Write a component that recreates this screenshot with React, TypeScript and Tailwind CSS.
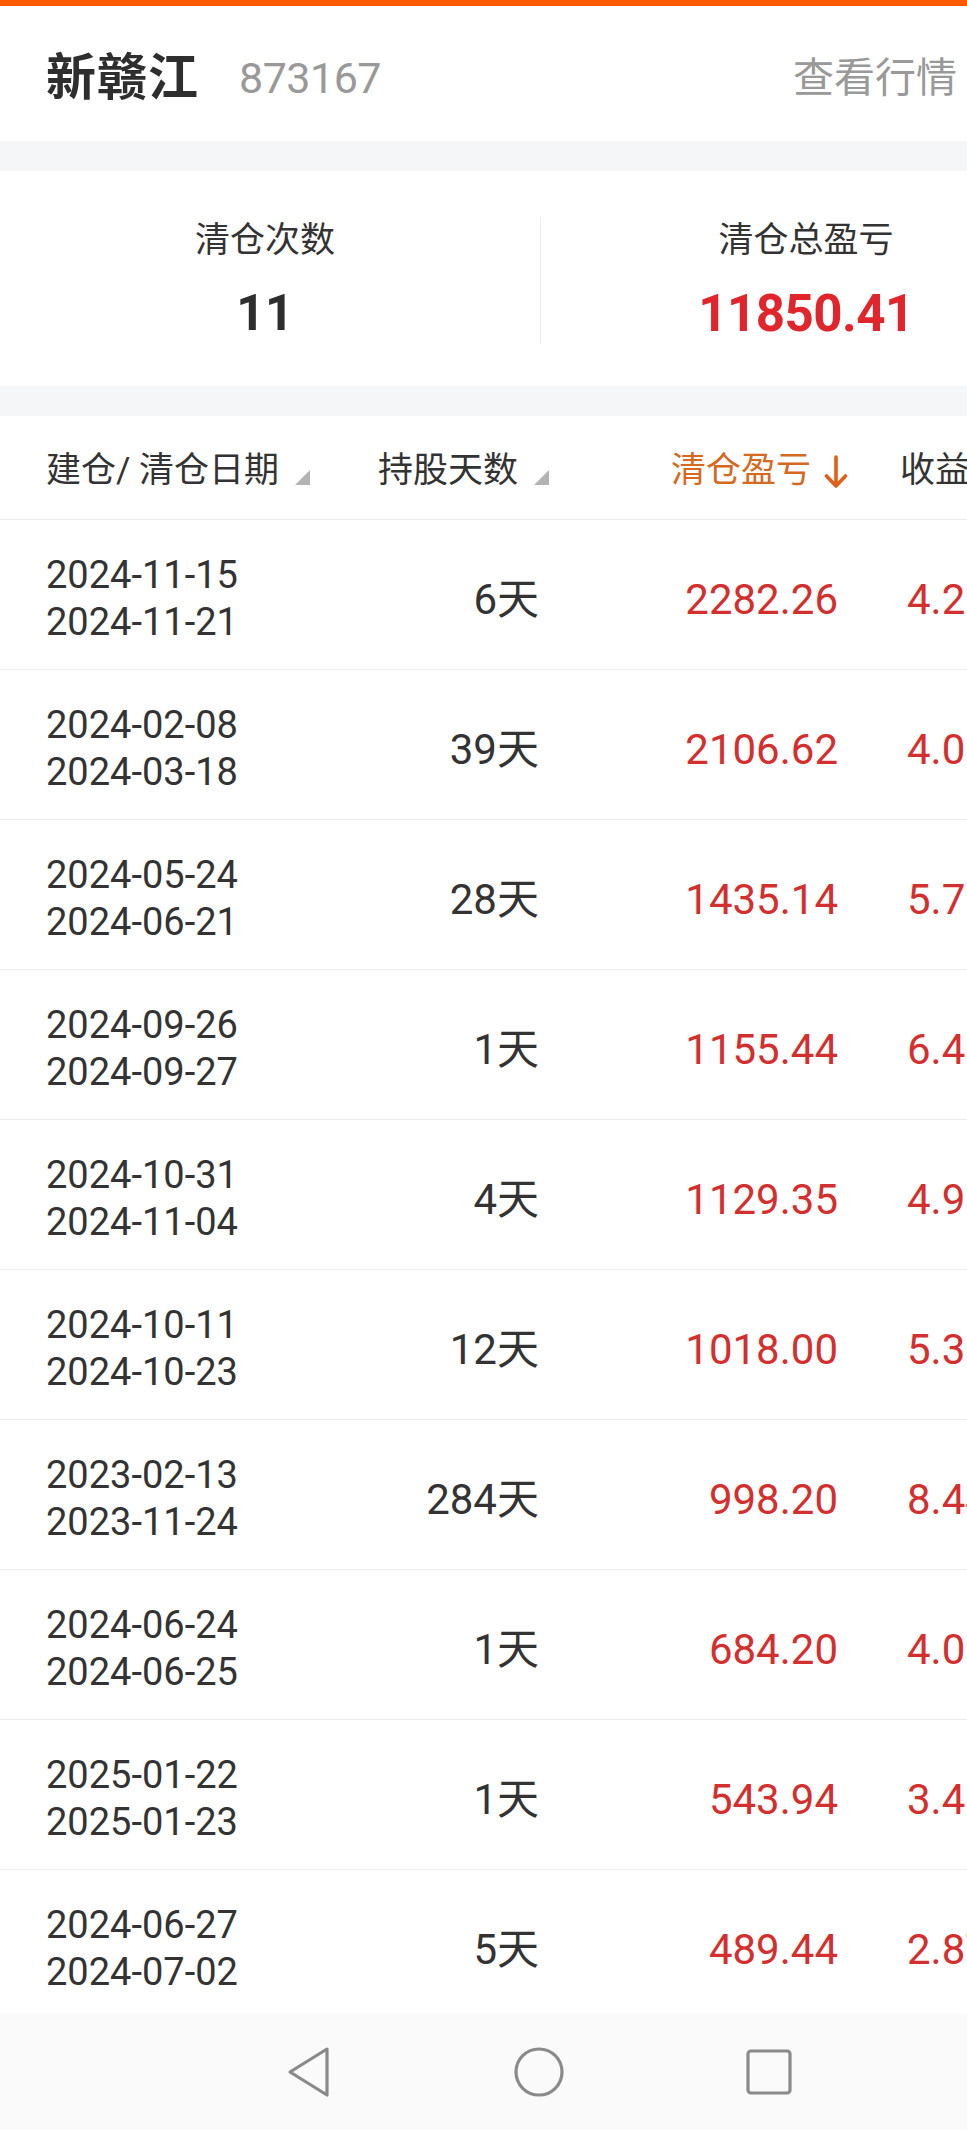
import React from "react";

interface Trade {
  open: string;
  close: string;
  days: number;
  profit: string;
  yieldPct: string;
}

const trades: Trade[] = [
  { open: "2024-11-15", close: "2024-11-21", days: 6, profit: "2282.26", yieldPct: "4.25%" },
  { open: "2024-02-08", close: "2024-03-18", days: 39, profit: "2106.62", yieldPct: "4.01%" },
  { open: "2024-05-24", close: "2024-06-21", days: 28, profit: "1435.14", yieldPct: "5.72%" },
  { open: "2024-09-26", close: "2024-09-27", days: 1, profit: "1155.44", yieldPct: "6.41%" },
  { open: "2024-10-31", close: "2024-11-04", days: 4, profit: "1129.35", yieldPct: "4.93%" },
  { open: "2024-10-11", close: "2024-10-23", days: 12, profit: "1018.00", yieldPct: "5.31%" },
  { open: "2023-02-13", close: "2023-11-24", days: 284, profit: "998.20", yieldPct: "8.44%" },
  { open: "2024-06-24", close: "2024-06-25", days: 1, profit: "684.20", yieldPct: "4.02%" },
  { open: "2025-01-22", close: "2025-01-23", days: 1, profit: "543.94", yieldPct: "3.46%" },
  { open: "2024-06-27", close: "2024-07-02", days: 5, profit: "489.44", yieldPct: "2.87%" },
];

const SortCorner = () => (
  <svg width="15" height="15" viewBox="0 0 15 15" className="ml-[16px] mt-[12px]">
    <polygon points="15,0 15,15 0,15" fill="#b3b3b3" />
  </svg>
);

const DownArrow = () => (
  <svg width="24" height="34" viewBox="0 0 24 34" className="ml-[13px]">
    <path d="M12 2 V31 M2.5 21 L12 31 L21.5 21" stroke="#e0601a" strokeWidth="3.6" fill="none" strokeLinecap="round" strokeLinejoin="round" />
  </svg>
);

export default function App() {
  return (
    <div className="w-[967px] h-[2130px] overflow-hidden bg-[#f5f6f8] flex flex-col [font-family:Roboto,'Noto_Sans_CJK_SC',sans-serif] text-[#333]">
      <div className="flex-1 min-h-0 overflow-hidden flex flex-col">
        <div className="h-[6px] bg-[#ff5a00] shrink-0" />
        {/* header */}
        <div className="h-[135px] pt-[10px] bg-white flex items-center pl-[46px] pr-[10px] shrink-0 whitespace-nowrap">
          <span className="text-[50px] font-bold text-[#2e2e2e] tracking-[1px]">新赣江</span>
          <span className="ml-[40px] text-[43px] text-[#999] tracking-[-0.5px]">873167</span>
          <span className="ml-auto text-[41px] text-[#999]">查看行情</span>
        </div>

        {/* summary */}
        <div className="mt-[30px] h-[215px] pt-[4px] bg-white flex items-center shrink-0 overflow-hidden">
          <div className="w-[530px] shrink-0 flex flex-col items-center">
            <span className="text-[35px] text-[#333] leading-none">清仓次数</span>
            <span className="mt-[30px] text-[50px] font-bold text-[#2e2e2e] leading-none">11</span>
          </div>
          <div className="ml-[10px] w-px h-[127px] bg-[#ececec] shrink-0" />
          <div className="w-[530px] shrink-0 flex flex-col items-center">
            <span className="text-[35px] text-[#333] leading-none">清仓总盈亏</span>
            <span className="mt-[30px] text-[51px] font-bold text-[#e0262c] leading-none tracking-[-0.5px]">11850.41</span>
          </div>
        </div>

        {/* table */}
        <div className="mt-[30px] bg-white flex-1 min-h-0 overflow-hidden">
          <div className="h-[104px] pt-[8px] flex items-center border-b border-[#ececec] whitespace-nowrap text-[35px]">
            <div className="w-[378px] shrink-0 pl-[46px] flex items-center">
              <span>建仓/ 清仓日期</span>
              <SortCorner />
            </div>
            <div className="w-[293px] shrink-0 flex items-center">
              <span>持股天数</span>
              <SortCorner />
            </div>
            <div className="w-[229px] shrink-0 flex items-center text-[#d4691f]">
              <span>清仓盈亏</span>
              <DownArrow />
            </div>
            <div className="shrink-0">收益率</div>
          </div>

          {trades.map((t) => (
            <div
              key={t.open + t.profit}
              className="h-[150px] pt-[9px] flex items-center border-b border-[#ececec] whitespace-nowrap"
            >
              <div className="w-[346px] shrink-0 pl-[46px] flex flex-col text-[38px] leading-[47px] text-[#333]">
                <span>{t.open}</span>
                <span>{t.close}</span>
              </div>
              <div className="w-[193px] shrink-0 text-right text-[42px] text-[#333]">
                {t.days}天
              </div>
              <div className="w-[299px] shrink-0 text-right text-[42px] text-[#d32f2f]">
                {t.profit}
              </div>
              <div className="ml-[69px] shrink-0 text-[42px] text-[#d32f2f]">{t.yieldPct}</div>
            </div>
          ))}
        </div>
      </div>

      {/* nav bar */}
      <div className="h-[117px] shrink-0 bg-[#fafafa] flex items-center pl-[194px]">
        <div className="w-[230px] flex justify-center">
          <svg width="46" height="52" viewBox="0 0 46 52">
            <path d="M41 3 L4 26 L41 49 Z" stroke="#8a8a8a" strokeWidth="3.2" fill="none" strokeLinejoin="round" />
          </svg>
        </div>
        <div className="w-[230px] flex justify-center">
          <svg width="52" height="52" viewBox="0 0 52 52">
            <circle cx="26" cy="26" r="23" stroke="#8a8a8a" strokeWidth="3.2" fill="none" />
          </svg>
        </div>
        <div className="w-[230px] flex justify-center">
          <svg width="48" height="48" viewBox="0 0 48 48">
            <rect x="3" y="3" width="42" height="42" rx="3" stroke="#8a8a8a" strokeWidth="3.2" fill="none" />
          </svg>
        </div>
      </div>
    </div>
  );
}
